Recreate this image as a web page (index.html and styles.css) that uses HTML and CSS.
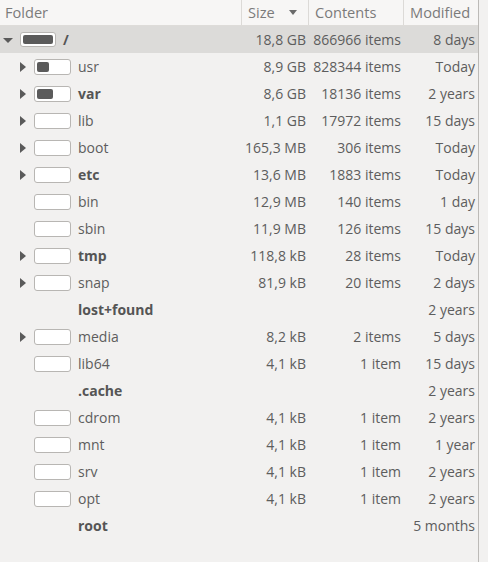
FILE: index.html
```html
<!DOCTYPE html>
<html>
<head>
<meta charset="utf-8">
<link rel="stylesheet" href="styles.css">
</head>
<body>
<div class="view">
  <div class="header">
    <div class="hcell">Folder</div>
    <div class="hcell sorted">Size <span class="sort-arrow"></span></div>
    <div class="hcell">Contents</div>
    <div class="hcell">Modified</div>
  </div>
  <div class="rows">
    <div class="row selected lvl0">
      <div class="name"><span class="exp down"></span><span class="bar"><span class="fill" style="width:32px"></span></span><span class="label bold">/</span></div>
      <div class="num">18,8 GB</div><div class="num">866966 items</div><div class="num">8 days</div>
    </div>
    <div class="row lvl1">
      <div class="name"><span class="exp right"></span><span class="bar"><span class="fill" style="width:12px"></span></span><span class="label">usr</span></div>
      <div class="num">8,9 GB</div><div class="num">828344 items</div><div class="num">Today</div>
    </div>
    <div class="row lvl1">
      <div class="name"><span class="exp right"></span><span class="bar"><span class="fill" style="width:16px"></span></span><span class="label bold">var</span></div>
      <div class="num">8,6 GB</div><div class="num">18136 items</div><div class="num">2 years</div>
    </div>
    <div class="row lvl1">
      <div class="name"><span class="exp right"></span><span class="bar"></span><span class="label">lib</span></div>
      <div class="num">1,1 GB</div><div class="num">17972 items</div><div class="num">15 days</div>
    </div>
    <div class="row lvl1">
      <div class="name"><span class="exp right"></span><span class="bar"></span><span class="label">boot</span></div>
      <div class="num">165,3 MB</div><div class="num">306 items</div><div class="num">Today</div>
    </div>
    <div class="row lvl1">
      <div class="name"><span class="exp right"></span><span class="bar"></span><span class="label bold">etc</span></div>
      <div class="num">13,6 MB</div><div class="num">1883 items</div><div class="num">Today</div>
    </div>
    <div class="row lvl1">
      <div class="name"><span class="exp"></span><span class="bar"></span><span class="label">bin</span></div>
      <div class="num">12,9 MB</div><div class="num">140 items</div><div class="num">1 day</div>
    </div>
    <div class="row lvl1">
      <div class="name"><span class="exp"></span><span class="bar"></span><span class="label">sbin</span></div>
      <div class="num">11,9 MB</div><div class="num">126 items</div><div class="num">15 days</div>
    </div>
    <div class="row lvl1">
      <div class="name"><span class="exp right"></span><span class="bar"></span><span class="label bold">tmp</span></div>
      <div class="num">118,8 kB</div><div class="num">28 items</div><div class="num">Today</div>
    </div>
    <div class="row lvl1">
      <div class="name"><span class="exp right"></span><span class="bar"></span><span class="label">snap</span></div>
      <div class="num">81,9 kB</div><div class="num">20 items</div><div class="num">2 days</div>
    </div>
    <div class="row lvl1">
      <div class="name"><span class="exp"></span><span class="bar hidden"></span><span class="label bold">lost+found</span></div>
      <div class="num"></div><div class="num"></div><div class="num">2 years</div>
    </div>
    <div class="row lvl1">
      <div class="name"><span class="exp right"></span><span class="bar"></span><span class="label">media</span></div>
      <div class="num">8,2 kB</div><div class="num">2 items</div><div class="num">5 days</div>
    </div>
    <div class="row lvl1">
      <div class="name"><span class="exp"></span><span class="bar"></span><span class="label">lib64</span></div>
      <div class="num">4,1 kB</div><div class="num">1 item</div><div class="num">15 days</div>
    </div>
    <div class="row lvl1">
      <div class="name"><span class="exp"></span><span class="bar hidden"></span><span class="label bold">.cache</span></div>
      <div class="num"></div><div class="num"></div><div class="num">2 years</div>
    </div>
    <div class="row lvl1">
      <div class="name"><span class="exp"></span><span class="bar"></span><span class="label">cdrom</span></div>
      <div class="num">4,1 kB</div><div class="num">1 item</div><div class="num">2 years</div>
    </div>
    <div class="row lvl1">
      <div class="name"><span class="exp"></span><span class="bar"></span><span class="label">mnt</span></div>
      <div class="num">4,1 kB</div><div class="num">1 item</div><div class="num">1 year</div>
    </div>
    <div class="row lvl1">
      <div class="name"><span class="exp"></span><span class="bar"></span><span class="label">srv</span></div>
      <div class="num">4,1 kB</div><div class="num">1 item</div><div class="num">2 years</div>
    </div>
    <div class="row lvl1">
      <div class="name"><span class="exp"></span><span class="bar"></span><span class="label">opt</span></div>
      <div class="num">4,1 kB</div><div class="num">1 item</div><div class="num">2 years</div>
    </div>
    <div class="row lvl1">
      <div class="name"><span class="exp"></span><span class="bar hidden"></span><span class="label bold">root</span></div>
      <div class="num"></div><div class="num"></div><div class="num">5 months</div>
    </div>
  </div>
</div>
</body>
</html>
```

FILE: styles.css
```css
html, body {
  margin: 0;
  padding: 0;
  background: #f2f1f0;
}
body {
  font-family: "Open Sans", "DejaVu Sans", sans-serif;
  font-size: 14px;
  color: #5d5d5d;
  width: 488px;
  height: 562px;
  overflow: hidden;
}
.view {
  width: 478px;
  height: 562px;
  border-right: 1px solid #bcbab7;
  box-sizing: content-box;
}
.header {
  display: grid;
  grid-template-columns: 242px 67px 95px 74px;
  height: 25px;
  background: #f7f6f5;
  border-bottom: 1px solid #dedcd9;
  font-size: 14.6px;
}
.hcell {
  display: flex;
  align-items: center;
  padding-left: 6px;
  color: #7b7b7b;
  border-right: 1px solid #dcdad7;
  line-height: 25px;
}
.hcell:first-child { padding-left: 5px; }
.hcell:last-child { border-right: none; }
.sort-arrow {
  margin-left: 14px;
  width: 0;
  height: 0;
  border-left: 4px solid transparent;
  border-right: 4px solid transparent;
  border-top: 5px solid #6a6a6a;
}
.row {
  display: grid;
  grid-template-columns: 242px 67px 95px 74px;
  height: 27px;
  align-items: center;
}
.row.selected { background: #dcdbd9; }
.name {
  display: flex;
  align-items: center;
  height: 27px;
}
.lvl1 .name { padding-left: 14px; }
.exp {
  width: 20px;
  height: 27px;
  flex: none;
  position: relative;
}
.exp.down::before {
  content: "";
  position: absolute;
  left: 3px;
  top: 12px;
  border-left: 5px solid transparent;
  border-right: 5px solid transparent;
  border-top: 5px solid #5a5a5a;
}
.exp.right::before {
  content: "";
  position: absolute;
  left: 6px;
  top: 9px;
  border-top: 5px solid transparent;
  border-bottom: 5px solid transparent;
  border-left: 6px solid #5a5a5a;
}
.bar {
  flex: none;
  box-sizing: border-box;
  width: 37px;
  height: 16px;
  border: 1px solid #b8b6b3;
  border-radius: 3px;
  background: #ffffff;
  padding: 2px;
  display: flex;
}
.lvl0 .bar { width: 36px; height: 15px; }
.bar.hidden { visibility: hidden; }
.fill {
  display: block;
  height: 100%;
  background: #5b5b5b;
  border-radius: 2px;
}
.label {
  margin-left: 7px;
  white-space: nowrap;
}
.bold { font-weight: bold; color: #555; }
.num {
  text-align: right;
  padding-right: 3px;
  white-space: nowrap;
}
.num:last-child { padding-right: 3px; }
```
